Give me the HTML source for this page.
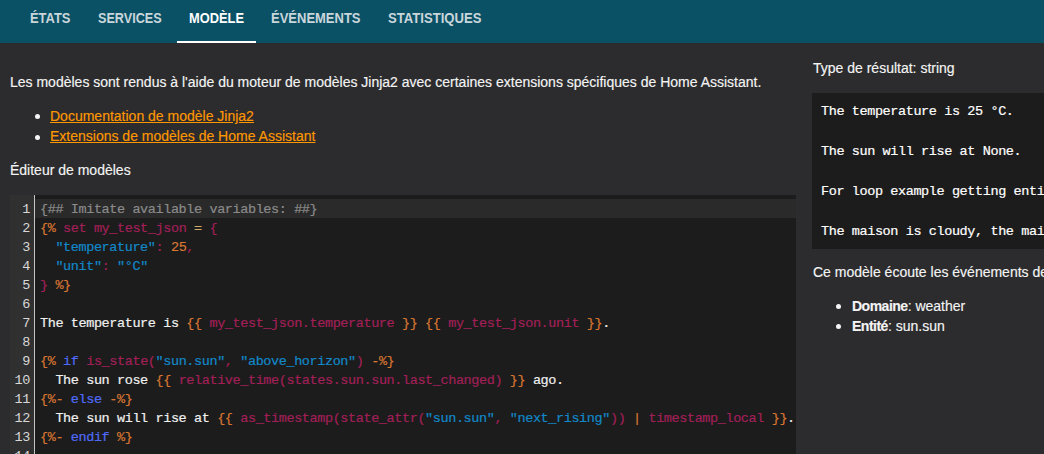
<!DOCTYPE html>
<html><head><meta charset="utf-8">
<style>
*{box-sizing:border-box;margin:0;padding:0}
html,body{width:1044px;height:454px;overflow:hidden;background:#2c2c2e;font-family:"Liberation Sans",sans-serif;color:#e1e1e1}
.abs{position:absolute;white-space:pre}
#hdr{position:absolute;left:0;top:0;width:1044px;height:43px;background:#0b5166}
.tab{position:absolute;top:11px;display:inline-block;transform-origin:0 0;font-size:14px;font-weight:bold;line-height:14px;color:#c9d6db;white-space:pre}
.tab.on{color:#fff}
#ind{position:absolute;left:177px;top:41px;width:79px;height:2px;background:#fff}
.t14{font-size:14px;line-height:16px;color:#f4f4f4;-webkit-text-stroke:0.15px currentColor}
a{color:#ff9800;text-decoration:underline}
.bul{position:absolute;width:5px;height:5px;border-radius:50%;background:#f4f4f4}
#ed{position:absolute;left:10px;top:195px;width:786px;height:259px;background:#1c1c1c;overflow:hidden}
#gut{position:absolute;left:0;top:0;width:25px;height:259px;background:#303031;border-right:1px solid #c4c4c4}
#act{position:absolute;left:25px;top:4px;width:761px;height:19px;background:#2a2a2a}
.ln{position:absolute;left:0;margin-top:1px;width:20px;text-align:right;font-family:"Liberation Mono",monospace;font-size:13.5px;letter-spacing:-0.4px;color:#d8d8d8;line-height:19px}
.cl{position:absolute;left:30px;margin-top:1px;-webkit-text-stroke:0.2px currentColor;font-family:"Liberation Mono",monospace;font-size:13.5px;letter-spacing:-0.4px;line-height:19px;white-space:pre;color:#f0f0f0}
.cm{color:#8a8a8a}.tg{color:#d87632}.vr{color:#a21f58}.st{color:#1288c8}.kw{color:#4f6af8}.op{color:#cda869}.nu{color:#d87632}
#res{position:absolute;left:812px;top:93px;width:240px;height:156px;background:#1c1c1c}
.rl{position:absolute;left:9px;margin-top:1px;-webkit-text-stroke:0.2px currentColor;font-family:"Liberation Mono",monospace;font-size:13.5px;letter-spacing:-0.4px;line-height:20px;white-space:pre;color:#ffffff}
b{font-weight:bold;color:#f4f4f4;letter-spacing:-0.5px}
</style></head><body>
<div id="hdr">
  <span class="tab" style="left:30px;transform:scaleX(0.923)">ÉTATS</span>
  <span class="tab" style="left:98px;transform:scaleX(0.903)">SERVICES</span>
  <span class="tab on" style="left:189px;transform:scaleX(0.918)">MODÈLE</span>
  <span class="tab" style="left:271px;transform:scaleX(0.928)">ÉVÉNEMENTS</span>
  <span class="tab" style="left:388px;transform:scaleX(0.936)">STATISTIQUES</span>
  <div id="ind"></div>
</div>

<div class="abs t14" style="left:10px;top:74px">Les modèles sont rendus à l'aide du moteur de modèles Jinja2 avec certaines extensions spécifiques de Home Assistant.</div>
<div class="bul" style="left:35px;top:114px"></div>
<div class="abs t14" style="left:50px;top:108px"><a>Documentation de modèle Jinja2</a></div>
<div class="bul" style="left:35px;top:135px"></div>
<div class="abs t14" style="left:50px;top:128px"><a>Extensions de modèles de Home Assistant</a></div>
<div class="abs t14" style="left:10px;top:162px">Éditeur de modèles</div>

<div id="ed">
  <div id="gut"></div>
  <div id="act"></div>
  <div class="ln" style="top:4px">1</div>
  <div class="ln" style="top:23px">2</div>
  <div class="ln" style="top:42px">3</div>
  <div class="ln" style="top:61px">4</div>
  <div class="ln" style="top:80px">5</div>
  <div class="ln" style="top:99px">6</div>
  <div class="ln" style="top:118px">7</div>
  <div class="ln" style="top:137px">8</div>
  <div class="ln" style="top:156px">9</div>
  <div class="ln" style="top:175px">10</div>
  <div class="ln" style="top:194px">11</div>
  <div class="ln" style="top:213px">12</div>
  <div class="ln" style="top:232px">13</div>
  <div class="ln" style="top:251px">14</div>
  <div class="cl" style="top:4px"><span class="cm">{## Imitate available variables: ##}</span></div>
  <div class="cl" style="top:23px"><span class="tg">{%</span> <span class="vr">set my_test_json</span> <span class="op">=</span> <span class="vr">{</span></div>
  <div class="cl" style="top:42px">  <span class="st">"temperature"</span><span class="vr">:</span> <span class="nu">25</span><span class="vr">,</span></div>
  <div class="cl" style="top:61px">  <span class="st">"unit"</span><span class="vr">:</span> <span class="st">"°C"</span></div>
  <div class="cl" style="top:80px"><span class="vr">}</span> <span class="tg">%}</span></div>
  <div class="cl" style="top:118px">The temperature is <span class="tg">{{</span> <span class="vr">my_test_json.temperature</span> <span class="tg">}}</span> <span class="tg">{{</span> <span class="vr">my_test_json.unit</span> <span class="tg">}}</span>.</div>
  <div class="cl" style="top:156px"><span class="tg">{%</span> <span class="kw">if</span> <span class="vr">is_state(</span><span class="st">"sun.sun"</span><span class="vr">,</span> <span class="st">"above_horizon"</span><span class="vr">)</span> <span class="tg">-%}</span></div>
  <div class="cl" style="top:175px">  The sun rose <span class="tg">{{</span> <span class="vr">relative_time(states.sun.sun.last_changed)</span> <span class="tg">}}</span> ago.</div>
  <div class="cl" style="top:194px"><span class="tg">{%-</span> <span class="kw">else</span> <span class="tg">-%}</span></div>
  <div class="cl" style="top:213px">  The sun will rise at <span class="tg">{{</span> <span class="vr">as_timestamp(state_attr(</span><span class="st">"sun.sun"</span><span class="vr">,</span> <span class="st">"next_rising"</span><span class="vr">))</span> <span class="tg">|</span> <span class="vr">timestamp_local</span> <span class="tg">}}</span>.</div>
  <div class="cl" style="top:232px"><span class="tg">{%-</span> <span class="kw">endif</span> <span class="tg">%}</span></div>
</div>

<div class="abs t14" style="left:813px;top:60px">Type de résultat: string</div>
<div id="res">
  <div class="rl" style="top:8px">The temperature is 25 °C.</div>
  <div class="rl" style="top:48px">The sun will rise at None.</div>
  <div class="rl" style="top:88px">For loop example getting entity values in the weather domain:</div>
  <div class="rl" style="top:128px">The maison is cloudy, the maison is sunny.</div>
</div>
<div class="abs t14" style="left:813px;top:264px">Ce modèle écoute les événements de changement d'état suivants :</div>
<div class="bul" style="left:836px;top:304px"></div>
<div class="abs t14" style="left:852px;top:298px"><b>Domaine</b>: weather</div>
<div class="bul" style="left:836px;top:324px"></div>
<div class="abs t14" style="left:852px;top:318px"><b>Entité</b>: sun.sun</div>
</body></html>
